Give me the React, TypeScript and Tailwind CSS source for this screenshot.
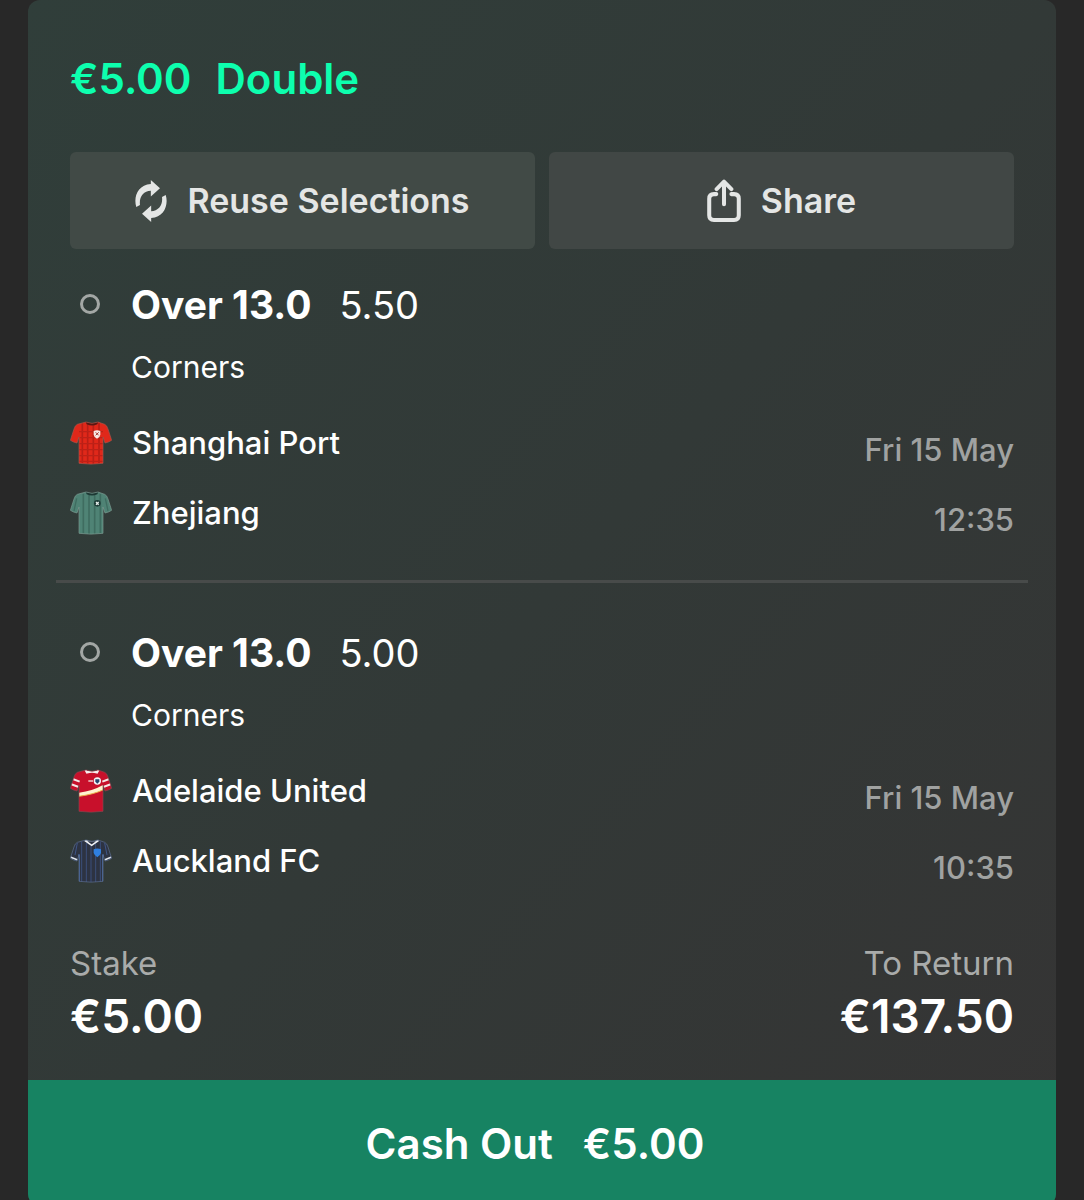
import type { ReactNode } from 'react';

interface Team {
  name: string;
  shirt: ReactNode;
}

interface Leg {
  selection: string;
  odds: string;
  market: string;
  teams: Team[];
  date: string;
  time: string;
}

const SHIRT_PATH =
  'M48 3 Q66 11 84 3 L104 10 Q111 13 114 24 L125 58 Q116 64 105 66 L99 48 V127 Q63 132 27 127 V48 L21 66 Q10 64 1 58 L12 24 Q15 13 22 10 Z';

function Shirt({ id, color, outline, children }: { id: string; color: string; outline: string; children?: ReactNode }) {
  return (
    <svg className="h-11 w-[42px] shrink-0" viewBox="0 0 126 132" fill="none" aria-hidden="true">
      <clipPath id={id}>
        <path d={SHIRT_PATH} />
      </clipPath>
      <g clipPath={`url(#${id})`}>
        <rect width="126" height="132" fill={color} />
        {children}
      </g>
      <path d={SHIRT_PATH} stroke={outline} strokeWidth="2" />
    </svg>
  );
}

function ShanghaiShirt() {
  return (
    <Shirt id="shanghai" color="#e0281a" outline="#a8564c">
      <path d="M37 6V130M53 6V130M70 6V130M87 6V130" stroke="#b91f16" strokeWidth="5" />
      <path d="M27 32H99M27 50H99M27 68H99M27 86H99M27 104H99M27 121H99" stroke="#bd2117" strokeWidth="4" />
      <path d="M46 0H86L82 10Q66 17 50 10Z" fill="#5a1713" />
      <path d="M71 30Q81 25 91 30V41Q90 49 81 53Q72 49 71 41Z" fill="#f7e9e5" />
      <path d="M77 34L86 43M86 34L77 43" stroke="#a33a30" strokeWidth="3" />
    </Shirt>
  );
}

function ZhejiangShirt() {
  return (
    <Shirt id="zhejiang" color="#4f8375" outline="#7d9b92">
      <path d="M40 8V130M57 12V130M74 12V130M91 8V130" stroke="#3f6c60" strokeWidth="5" />
      <path d="M20 22L12 60M106 22L114 60" stroke="#3f6c60" strokeWidth="4" />
      <path d="M46 0H86L82 10Q66 17 50 10Z" fill="#1c3934" />
      <circle cx="82" cy="37" r="10" fill="#1d3d38" />
      <path d="M78 33L86 41M86 33L78 41" stroke="#e8efec" strokeWidth="4" />
    </Shirt>
  );
}

function AdelaideShirt() {
  return (
    <Shirt id="adelaide" color="#c8102b" outline="#8d4650">
      <path d="M2 45L26 54M8 30L29 38M124 45L100 54M118 30L97 38" stroke="#f4e6e6" strokeWidth="6" />
      <path d="M27 71Q68 66 99 48V63Q70 76 27 82Z" fill="#fff3cf" />
      <path d="M27 82Q70 76 99 63" stroke="#e8b04a" strokeWidth="3" />
      <path d="M46 1L51 10Q66 5 81 10L86 1" stroke="#f6eeee" strokeWidth="7" />
      <path d="M55 36H69" stroke="#f2c9c9" strokeWidth="4" />
      <circle cx="82" cy="36" r="11" fill="#f4f4f6" />
      <path d="M76 31H88V38L82 44L76 38Z" fill="#28456d" />
    </Shirt>
  );
}

function AucklandShirt() {
  return (
    <Shirt id="auckland" color="#2d3342" outline="#5d6f94">
      <path d="M35 8V130M49 12V130M63 20V130M77 12V130M91 8V130" stroke="#3b4f7a" strokeWidth="3" />
      <path d="M27 46V130M99 46V130" stroke="#4a74b8" strokeWidth="4" />
      <path d="M22 12L15 48M104 12L111 48" stroke="#3f5687" strokeWidth="3" />
      <path d="M1 54L23 63M125 54L103 63" stroke="#dfe4ec" strokeWidth="5" />
      <path d="M46 4H86M44 4L65 19L86 4" stroke="#eef1f5" strokeWidth="5" />
      <path d="M71 31Q82 26 93 31V42Q90 50 82 55Q74 50 71 42Z" fill="#2f7fe0" />
    </Shirt>
  );
}

function ReuseIcon() {
  return (
    <svg className="h-[42px] w-8" viewBox="0 0 93 124" fill="currentColor" aria-hidden="true">
      <path d="M3 80C-6 50 8 14 46 12V0L73 24L46 49V32C24 33 11 50 14 74Z" />
      <path d="M90 44C99 74 85 110 47 112V124L20 100L47 75V92C69 91 82 74 79 50Z" />
    </svg>
  );
}

function ShareIcon() {
  return (
    <svg
      className="h-[43px] w-[34px]"
      viewBox="0 0 100 128"
      fill="none"
      stroke="currentColor"
      strokeWidth="12"
      strokeLinecap="round"
      strokeLinejoin="round"
      aria-hidden="true"
    >
      <path d="M27 45H20Q6 45 6 59V108Q6 122 20 122H80Q94 122 94 108V59Q94 45 80 45H72" />
      <path d="M50 9V75M28 30L50 8L72 30" />
    </svg>
  );
}

const legs: Leg[] = [
  {
    selection: 'Over 13.0',
    odds: '5.50',
    market: 'Corners',
    teams: [
      { name: 'Shanghai Port', shirt: <ShanghaiShirt /> },
      { name: 'Zhejiang', shirt: <ZhejiangShirt /> },
    ],
    date: 'Fri 15 May',
    time: '12:35',
  },
  {
    selection: 'Over 13.0',
    odds: '5.00',
    market: 'Corners',
    teams: [
      { name: 'Adelaide United', shirt: <AdelaideShirt /> },
      { name: 'Auckland FC', shirt: <AucklandShirt /> },
    ],
    date: 'Fri 15 May',
    time: '10:35',
  },
];

function LegItem({ leg }: { leg: Leg }) {
  return (
    <li className="px-[14px]">
      <div className="flex h-14 items-center">
        <span className="mr-[31px] mb-[3px] ml-[10px] size-5 rounded-full border-[3px] border-[#a3a7a5]" />
        <span className="text-[39px] font-bold">{leg.selection}</span>
        <span className="ml-7 text-[38px]">{leg.odds}</span>
      </div>
      <p className="pl-[61px] text-[30px] leading-[68px]">{leg.market}</p>
      <div className="mt-[7px] flex justify-between">
        <ul>
          {leg.teams.map((team) => (
            <li key={team.name} className="flex h-[70px] items-center gap-5 text-[31px] font-medium">
              {team.shirt}
              {team.name}
            </li>
          ))}
        </ul>
        <div className="pt-[7px] text-right text-[31px] leading-[70px] font-medium text-[#a0a2a1]">
          <p>{leg.date}</p>
          <p>{leg.time}</p>
        </div>
      </div>
    </li>
  );
}

export default function App() {
  return (
    <div className="max-h-screen overflow-hidden bg-[#282828] px-7 font-['Inter','Liberation_Sans',sans-serif] text-white">
      <main className="overflow-hidden rounded-xl bg-linear-to-br from-[#303e3a] via-[#323937] to-[#353434]">
        <div className="px-[42px]">
          <h1 className="flex gap-6 pt-[49px] text-[42px] leading-[60px] font-semibold text-[#0dffae]">
            <span>€5.00</span>
            <span>Double</span>
          </h1>
          <div className="mt-[43px] grid grid-cols-2 gap-[14px] text-[34px] font-semibold text-[#e4e6e5]">
            <button type="button" className="flex h-[97px] items-center justify-center gap-5 rounded-md bg-[#414a46]">
              <ReuseIcon />
              Reuse Selections
            </button>
            <button type="button" className="flex h-[97px] items-center justify-center gap-5 rounded-md bg-[#414745]">
              <ShareIcon />
              Share
            </button>
          </div>
        </div>

        <ul className="mx-7 mt-7 divide-y-[3px] divide-[#484b4a] [&>li+li]:pt-[42px] [&>li:first-child]:pb-[25px]">
          {legs.map((leg) => (
            <LegItem key={leg.teams[0].name} leg={leg} />
          ))}
        </ul>

        <dl className="flex justify-between px-[42px] pt-10 pb-[31px]">
          <div>
            <dt className="text-[33px] leading-[40px] text-[#a9abaa]">Stake</dt>
            <dd className="text-[46px] leading-[66px] font-semibold">€5.00</dd>
          </div>
          <div className="text-right">
            <dt className="text-[33px] leading-[40px] text-[#a9abaa]">To Return</dt>
            <dd className="text-[46px] leading-[66px] font-semibold">€137.50</dd>
          </div>
        </dl>

        <button
          type="button"
          className="flex h-[126px] w-full items-center justify-center gap-[30px] bg-[#178362] pr-[14px] text-[42px] font-semibold"
        >
          <span>Cash Out</span>
          <span>€5.00</span>
        </button>
      </main>
    </div>
  );
}
